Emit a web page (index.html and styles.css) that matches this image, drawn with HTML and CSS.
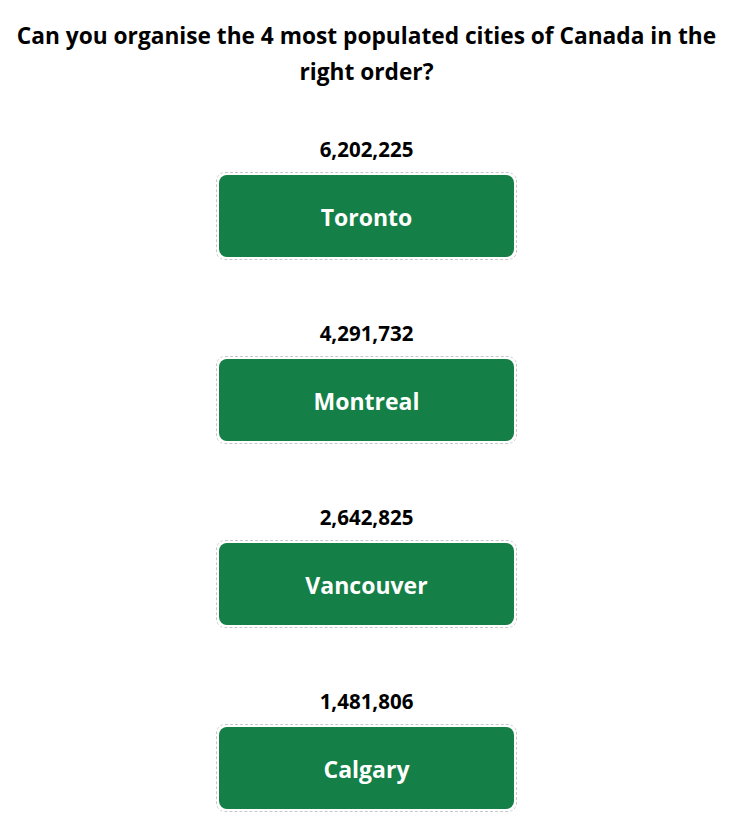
FILE: index.html
```html
<!DOCTYPE html>
<html>
<head>
<meta charset="utf-8">
<link rel="stylesheet" href="styles.css">
</head>
<body>
<h1 class="title">Can you organise the 4 most populated cities of Canada in the right order?</h1>
<div class="list">
  <div class="item">
    <div class="count">6,202,225</div>
    <div class="slot"><div class="card">Toronto</div></div>
  </div>
  <div class="item">
    <div class="count">4,291,732</div>
    <div class="slot"><div class="card">Montreal</div></div>
  </div>
  <div class="item">
    <div class="count">2,642,825</div>
    <div class="slot"><div class="card">Vancouver</div></div>
  </div>
  <div class="item">
    <div class="count">1,481,806</div>
    <div class="slot"><div class="card">Calgary</div></div>
  </div>
</div>
</body>
</html>
```

FILE: styles.css
```css
html, body {
  margin: 0;
  padding: 0;
  background: #fff;
}
body {
  font-family: "Open Sans", "Noto Sans", sans-serif;
  color: #000;
  padding: 18px 8px 0;
}
.title {
  margin: 0;
  font-size: 22.7px;
  line-height: 36px;
  font-weight: 700;
  text-align: center;
}
.list {
  display: flex;
  flex-direction: column;
  align-items: center;
  gap: 61px;
  margin-top: 47px;
}
.item {
  display: flex;
  flex-direction: column;
  align-items: center;
  gap: 11px;
}
.count {
  font-size: 20.5px;
  line-height: 24px;
  font-weight: 700;
}
.slot {
  width: 295px;
  padding: 2px;
  border: 1px dashed #c8c8c8;
  border-radius: 9px;
}
.card {
  height: 82px;
  padding-top: 2px;
  box-sizing: border-box;
  background: #147f46;
  border-radius: 8px;
  color: #fff;
  font-size: 23px;
  font-weight: 700;
  display: flex;
  align-items: center;
  justify-content: center;
}
```
